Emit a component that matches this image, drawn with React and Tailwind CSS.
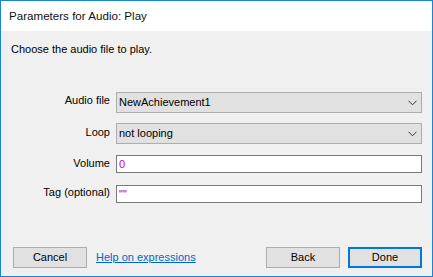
const font = { fontFamily: '"Liberation Sans", Arial, sans-serif' }

function Chevron() {
  return (
    <svg width="9" height="6" viewBox="0 0 9 6" className="shrink-0">
      <polyline points="0.5,0.8 4.5,4.8 8.5,0.8" fill="none" stroke="#333" strokeWidth="1" />
    </svg>
  )
}

function Combo({ value }) {
  return (
    <div className="flex items-center justify-between h-[21px] w-[306px] border border-[#adadad] bg-[#e1e1e1] pl-[2px] pr-[4px]">
      <span className="text-[11px] text-black leading-none">{value}</span>
      <Chevron />
    </div>
  )
}

function Field({ value, color }) {
  return (
    <div className="flex items-center h-[18px] w-[306px] border border-[#7a7a7a] bg-white pl-[2px]">
      <span className={`text-[11px] leading-none ${color}`}>{value}</span>
    </div>
  )
}

function Row({ label, children, top }) {
  return (
    <div className="flex items-start">
      <div className={`w-[115px] text-right pr-[6px] text-[11px] text-black leading-none ${top}`}>{label}</div>
      {children}
    </div>
  )
}

export default function App() {
  return (
    <div style={font} className="w-[433px] h-[277px] border border-[#1883d7] flex flex-col bg-[#f0f0f0] overflow-hidden">
      <div className="h-[30px] bg-white flex items-center pl-[8px] shrink-0">
        <span className="text-[11.6px] text-[#111] leading-none">Parameters for Audio: Play</span>
      </div>
      <div className="flex-1 flex flex-col">
        <p className="pl-[10px] pt-[13px] text-[11px] text-black leading-none">Choose the audio file to play.</p>
        <div className="flex flex-col mt-[37px]">
          <Row label="Audio file" top="pt-[3px]"><Combo value="NewAchievement1" /></Row>
          <div className="h-[10px]" />
          <Row label="Loop" top="pt-[4px]"><Combo value="not looping" /></Row>
          <div className="h-[11px]" />
          <Row label="Volume" top="pt-[3px]"><Field value="0" color="text-[#c000c0]" /></Row>
          <div className="h-[12px]" />
          <Row label="Tag (optional)" top="pt-[2px]"><Field value={'""'} color="text-[#c00000]" /></Row>
        </div>
        <div className="mt-auto mb-[8px] flex items-center pl-[12px] pr-[10px]">
          <button className="w-[74px] h-[21px] border border-[#adadad] bg-[#e1e1e1] text-[11px] text-black leading-none">Cancel</button>
          <a className="ml-[9px] text-[11px] text-[#0066cc] underline leading-none">Help on expressions</a>
          <button className="ml-auto w-[74px] h-[21px] border border-[#adadad] bg-[#e1e1e1] text-[11px] text-black leading-none">Back</button>
          <button className="ml-[8px] w-[74px] h-[21px] border-2 border-[#0078d7] bg-[#e1e1e1] text-[11px] text-black leading-none">Done</button>
        </div>
      </div>
    </div>
  )
}
